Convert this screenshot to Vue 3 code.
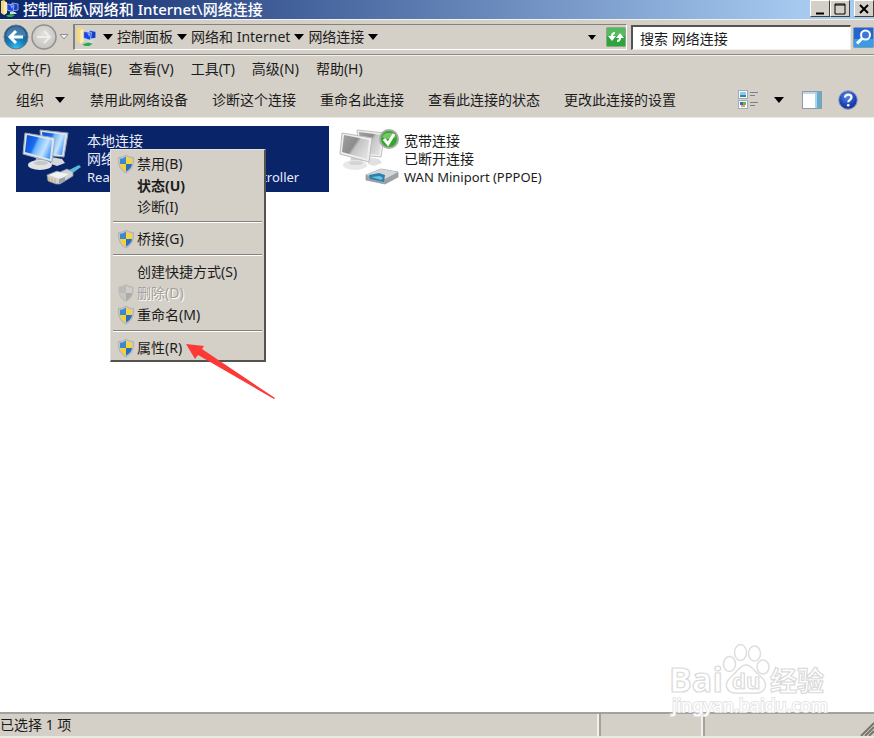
<script setup>
import { ref } from "vue";

const search = ref("搜索 网络连接");

const crumbs = ["控制面板", "网络和 Internet", "网络连接"];
const menus = ["文件(F)", "编辑(E)", "查看(V)", "工具(T)", "高级(N)", "帮助(H)"];
const commands = [
  "禁用此网络设备",
  "诊断这个连接",
  "重命名此连接",
  "查看此连接的状态",
  "更改此连接的设置",
];

const contextMenu = [
  [
    { text: "禁用(B)", shield: true },
    { text: "状态(U)", bold: true },
    { text: "诊断(I)" },
  ],
  [{ text: "桥接(G)", shield: true }],
  [
    { text: "创建快捷方式(S)" },
    { text: "删除(D)", shield: true, disabled: true },
    { text: "重命名(M)", shield: true },
  ],
  [{ text: "属性(R)", shield: true }],
];
</script>

<template>
  <div class="window">
    <svg class="defs" width="0" height="0" aria-hidden="true">
      <defs>
        <linearGradient id="screen" x1="0" y1="0.2" x2="1" y2="0.6">
          <stop offset="0" stop-color="#0d4fd6" />
          <stop offset="0.35" stop-color="#1a6cf0" />
          <stop offset="0.45" stop-color="#6db4ff" />
          <stop offset="0.75" stop-color="#c4e4ff" />
          <stop offset="1" stop-color="#4b9cf8" />
        </linearGradient>
        <linearGradient id="screenOff" x1="0" y1="0" x2="1" y2="0.6">
          <stop offset="0" stop-color="#a2a2a2" />
          <stop offset="0.5" stop-color="#8c8c8c" />
          <stop offset="0.6" stop-color="#c4c4c4" />
          <stop offset="1" stop-color="#dedede" />
        </linearGradient>
        <radialGradient id="backFill" cx="0.5" cy="0.95" r="0.9">
          <stop offset="0" stop-color="#35c0ee" />
          <stop offset="0.45" stop-color="#1479b4" />
          <stop offset="1" stop-color="#124a80" />
        </radialGradient>
        <radialGradient id="forwardFill" cx="0.5" cy="0.4" r="0.6">
          <stop offset="0" stop-color="#e2e0dc" />
          <stop offset="1" stop-color="#c6c4c0" />
        </radialGradient>
        <radialGradient id="helpFill" cx="0.45" cy="0.3" r="0.8">
          <stop offset="0" stop-color="#5c8ae8" />
          <stop offset="0.6" stop-color="#1c43b4" />
          <stop offset="1" stop-color="#102a80" />
        </radialGradient>
        <symbol id="folderNet" viewBox="0 0 18 18">
          <path d="M0 1l3-1 2 2v11l-2 2-3-2z" fill="#f3d978" />
          <path d="M3 3l3-1v11l-3 2z" fill="#fbeeb0" />
          <path d="M11 3l6 1v6l-6 1z" fill="#123fc4" stroke="#c9d6ee" stroke-width="0.7" />
          <path d="M6 4l7 1-1 7-6-2z" fill="#1d45e4" stroke="#c9d6ee" stroke-width="0.7" />
          <path d="M9 5l3 1-1 3z" fill="#7db4ff" />
          <path d="M9 12h5l2 2H9z" fill="#d5dbe2" />
          <path d="M5 15.500l5-1.500 4 1-3 2-4 0z" fill="#25b04b" />
        </symbol>
        <symbol id="shield" viewBox="0 0 18 20">
          <path d="M9 1C6.500 3 4 3.500 1.500 3.500C1 11 3 16 9 19C15 16 17 11 16.500 3.500C14 3.500 11.500 3 9 1z" fill="#c2c5c8" stroke="#a5a8ac" stroke-width="0.700" />
          <path d="M9 2.500C7 4 5 4.800 3 4.800V10H9z" fill="#3c88cf" />
          <path d="M9 2.500C11 4 13 4.800 15 4.800V10H9z" fill="#f6d545" />
          <path d="M3 10H9V17.500C5.500 15.500 3.300 13 3 10z" fill="#f7cf3b" />
          <path d="M15 10H9V17.500C12.500 15.500 14.700 13 15 10z" fill="#2a6ec0" />
        </symbol>
        <symbol id="shieldOff" viewBox="0 0 18 20">
          <path d="M9 1C6.500 3 4 3.500 1.500 3.500C1 11 3 16 9 19C15 16 17 11 16.500 3.500C14 3.500 11.500 3 9 1z" fill="#bcbab6" />
          <path d="M9 2.500C11 4 13 4.800 15 4.800V10H9z" fill="#d0cdc8" />
          <path d="M3 10H9V17.500C5.500 15.500 3.300 13 3 10z" fill="#c9c6c1" />
          <path d="M15 10H9V17.500C12.500 15.500 14.700 13 15 10z" fill="#adaba8" />
        </symbol>
      </defs>
    </svg>

    <header class="titlebar">
      <svg width="18" height="18"><use href="#folderNet" /></svg>
      <h1>控制面板\网络和 Internet\网络连接</h1>
      <div class="window-buttons">
        <button aria-label="最小化">
          <svg width="14" height="14"><path d="M3 11.500h8" stroke="#000" stroke-width="2" /></svg>
        </button>
        <button aria-label="最大化">
          <svg width="14" height="14"><path d="M2 2h10v10H2zM2 3h10" fill="none" stroke="#000" /></svg>
        </button>
        <button class="close" aria-label="关闭">
          <svg width="14" height="14"><path d="M3 3l8 8M11 3l-8 8" stroke="#000" stroke-width="2" /></svg>
        </button>
      </div>
    </header>

    <div class="navbar">
      <div class="history">
        <button aria-label="后退">
          <svg width="26" height="26">
            <circle cx="13" cy="13" r="12" fill="url(#backFill)" stroke="#69798a" />
            <path d="M3 12a10 10 0 0 1 20 0c-6 2-14 2-20 0z" fill="#fff" opacity="0.2" />
            <path d="M20 13H8M13 7l-6 6 6 6" fill="none" stroke="#fff" stroke-width="3" />
          </svg>
        </button>
        <button aria-label="前进">
          <svg width="26" height="26">
            <circle cx="13" cy="13" r="12" fill="url(#forwardFill)" stroke="#8f8f8f" stroke-width="1.500" />
            <path d="M6 13h12M13 7l6 6-6 6" fill="none" stroke="#efeeeb" stroke-width="2" />
          </svg>
        </button>
        <button aria-label="最近的页面">
          <svg width="10" height="8"><path d="M1 1.500h8L5 6z" fill="#f3f3f3" stroke="#8c8c94" /></svg>
        </button>
      </div>
      <nav class="address">
        <svg width="20" height="20"><use href="#folderNet" /></svg>
        <button class="arrow" aria-label="展开"></button>
        <template v-for="crumb in crumbs" :key="crumb">
          <a href="#">{{ crumb }}</a>
          <button class="arrow" :aria-label="crumb + ' 子项'"></button>
        </template>
        <button class="arrow small last" aria-label="以前的位置"></button>
        <button class="refresh" aria-label="刷新">
          <svg width="20" height="20">
            <rect x="0.500" y="0.500" width="19" height="19" rx="1" fill="#2da53c" stroke="#8aa888" />
            <path d="M1 1h18v8H1z" fill="#70c873" opacity="0.600" />
            <path d="M9 5C6 5 5 7 5 9H2l4 5 4-5H7c0-1 1-2 2-2zM11 15c3 0 4-2 4-4h3l-4-5-4 5h3c0 1-1 2-2 2z" fill="#fff" />
          </svg>
        </button>
      </nav>
      <form class="search" @submit.prevent>
        <input v-model="search" type="text" aria-label="搜索 网络连接" />
        <button aria-label="搜索">
          <svg width="21" height="21">
            <rect x="0.500" y="0.500" width="20" height="20" rx="1" fill="#2467cc" stroke="#8199c0" />
            <path d="M1 12h19v8H1z" fill="#45b5ec" opacity="0.700" />
            <circle cx="12.500" cy="8" r="4.500" fill="#3c78d8" stroke="#fff" stroke-width="2" />
            <path d="M9 11.500l-5 5" stroke="#fff" stroke-width="3" />
          </svg>
        </button>
      </form>
    </div>

    <nav class="menubar">
      <button v-for="menu in menus" :key="menu">{{ menu }}</button>
    </nav>

    <div class="toolbar">
      <button class="organize">组织<span class="arrow"></span></button>
      <button v-for="command in commands" :key="command">{{ command }}</button>
      <div class="tools">
        <button aria-label="更改视图">
          <svg width="20" height="20">
            <rect x="0.500" y="0.500" width="9" height="8" fill="#f8fbff" stroke="#a2acb8" />
            <path d="M2 2h6v3H2z" fill="#8bc8f4" />
            <path d="M2 5h6v2H2z" fill="#318d83" />
            <rect x="0.500" y="10.500" width="9" height="8" fill="#f8fbff" stroke="#a2acb8" />
            <path d="M2 12h3v3H2z" fill="#3d68c9" />
            <path d="M5 12h3v3H5z" fill="#69b64a" />
            <path d="M3 15h4v2H3z" fill="#e2a341" />
            <path d="M12 2.500h8M12 5.500h5M12 12.500h8M12 15.500h5" stroke="#77828f" />
          </svg>
        </button>
        <button class="arrow" aria-label="更多选项"></button>
        <button class="pane" aria-label="显示预览窗格">
          <svg width="20" height="18">
            <rect x="0.500" y="0.500" width="19" height="17" fill="#fff" stroke="#8a9bac" />
            <path d="M1 1h18v2H1z" fill="#c3d5e6" />
            <path d="M13 1h6v16h-6z" fill="#67aacb" />
            <path d="M13 1h2v16h-2z" fill="#a7d5e9" />
          </svg>
        </button>
        <button aria-label="获取帮助">
          <svg width="20" height="20">
            <circle cx="10" cy="10" r="9.300" fill="url(#helpFill)" stroke="#8c9cc4" />
            <path d="M7 7.500C7 3.500 13.500 3.800 13.500 7.300C13.500 9.800 10.200 9.800 10.200 12.300" fill="none" stroke="#fff" stroke-width="2.200" />
            <circle cx="10.200" cy="15.300" r="1.300" fill="#fff" />
          </svg>
        </button>
      </div>
    </div>

    <main class="content">
      <article class="connection selected">
        <svg width="62" height="60">
          <path d="M29 28l11 2 3 4-8 3-6-2z" fill="#d5d9dc" />
          <path d="M18 1l28 3-4 24-22-2z" fill="#dbe4ea" stroke="#8f9fae" />
          <path d="M20 3l23 3-3 20-18-2z" fill="url(#screen)" />
          <path d="M14 28l11 2 1 6H13z" fill="#aeb5bc" />
          <ellipse cx="18" cy="36" rx="12" ry="5" fill="#e0e2e4" />
          <ellipse cx="19" cy="34" rx="7" ry="2" fill="#c3c8cc" />
          <path d="M3 4l30 5-3 24-29-8z" fill="#dce5ec" stroke="#9daab8" />
          <path d="M5 6l25 5-2 19L3 23z" fill="url(#screen)" />
          <path d="M45 42l12-6 2 2-11 8z" fill="#55b9dc" />
          <path d="M25 46l10-4 3 1 7-3 6 3v4l-13 8-4 0-8-3z" fill="#cdd2d6" stroke="#8b949b" stroke-width="0.700" />
          <path d="M27 46l8-3 12 2-9 5z" fill="#f1f2f2" />
          <path d="M27 48v4m3-3v4m3-3v4" stroke="#d1a94a" />
          <path d="M37 50v5l6-3v-4z" fill="#9aa1a7" />
        </svg>
        <div class="details">
          <p>本地连接</p>
          <p>网络</p>
          <p class="device">Realtek PCIe GBE Family Controller</p>
        </div>
      </article>

      <article class="connection">
        <svg width="62" height="60">
          <path d="M29 28l11 2 3 4-8 3-6-2z" fill="#e0e0e0" />
          <path d="M18 1l28 3-4 24-22-2z" fill="#eee" stroke="#c0c0c0" />
          <path d="M20 3l23 3-3 20-18-2z" fill="url(#screenOff)" />
          <path d="M12 28l11 2 1 6H11z" fill="#d0d0d0" />
          <ellipse cx="16" cy="36" rx="12" ry="5" fill="#e8e8e8" />
          <ellipse cx="17" cy="34" rx="7" ry="2" fill="#d4d4d4" />
          <path d="M3 4l30 5-3 24-29-8z" fill="#efefef" stroke="#bbb" />
          <path d="M5 6l25 5-2 19L3 23z" fill="url(#screenOff)" />
          <path d="M27 46l15-6 17 3v5l-13 7-19-4z" fill="#9da2a7" stroke="#8c9298" stroke-width="0.700" />
          <path d="M27 46l15-6 17 3-13 7z" fill="#d4d7da" />
          <path d="M30 46l10-2 6 2-1 7-14-3z" fill="#2f7fae" />
          <path d="M32 48l9-1 3 2-2 2z" fill="#6bc0e4" />
          <circle cx="50" cy="10" r="9" fill="#34a729" stroke="#a7aba7" stroke-width="2" />
          <path d="M43 8a8 8 0 0 1 14 0c-3 2-10 3-14 0z" fill="#9fdc91" opacity="0.600" />
          <path d="M45 10l4 5 6-10" fill="none" stroke="#fff" stroke-width="3" />
        </svg>
        <div class="details">
          <p>宽带连接</p>
          <p>已断开连接</p>
          <p class="device">WAN Miniport (PPPOE)</p>
        </div>
      </article>

      <div class="context-menu" role="menu">
        <div v-for="(group, i) in contextMenu" :key="i" class="group" role="group">
          <button
            v-for="item in group"
            :key="item.text"
            role="menuitem"
            :class="{ bold: item.bold, shielded: item.shield }"
            :disabled="item.disabled"
          >
            <span class="icon">
              <svg v-if="item.shield" width="18" height="20">
                <use :href="item.disabled ? '#shieldOff' : '#shield'" />
              </svg>
            </span>
            {{ item.text }}
          </button>
        </div>
      </div>

      <svg class="pointer" width="90" height="56" aria-hidden="true">
        <path d="M0 0L18 2L16 5L89 54L88 55L12 11L9 15z" fill="#fb3a38" />
      </svg>
    </main>

    <footer class="statusbar">
      <span class="status">已选择 1 项</span>
      <span class="cell"></span>
      <span class="cell grip">
        <svg width="14" height="14">
          <path d="M1 14L14 1M5 14l9-9M9 14l5-5" stroke="#77756f" stroke-width="2" />
        </svg>
      </span>
    </footer>

    <svg class="watermark" width="164" height="78" aria-hidden="true">
      <g fill="#fff" stroke="#dedede" stroke-width="1.500">
        <ellipse cx="61.500" cy="22" rx="6" ry="7.500" />
        <ellipse cx="72.500" cy="10.500" rx="6" ry="8" />
        <ellipse cx="86.500" cy="11.500" rx="6" ry="7.500" />
        <ellipse cx="95" cy="25" rx="6" ry="7" />
        <path d="M78 23c-6 0-8 6-13 10-5 4-8 8-6 13 3 7 11 5 19 5s16 2 19-5c2-5-1-9-6-13-5-4-7-10-13-10z" />
      </g>
      <g class="outlined">
        <text x="1" y="50" font-size="34">Bai</text>
        <text x="64" y="47" font-size="22">du</text>
        <text x="102" y="49" font-size="27">经验</text>
      </g>
      <text class="site" x="4" y="70" font-size="18">jingyan.baidu.com</text>
    </svg>
  </div>
</template>

<style>
body {
  margin: 0;
  background: #fff;
}
</style>

<style scoped>
.window {
  position: relative;
  display: flex;
  flex-direction: column;
  min-height: 100vh;
  background: #d4d0c8;
  color: #1c1c1c;
  font: 14px/18px "Noto Sans", "Noto Sans CJK SC", sans-serif;
}
.defs {
  position: absolute;
}
svg {
  display: block;
  flex: none;
}
button {
  display: flex;
  align-items: center;
  padding: 0;
  border: 0;
  background: none;
  color: inherit;
  font: inherit;
  white-space: nowrap;
}
.arrow::before {
  content: "";
  display: block;
  border: 5px solid transparent;
  border-top: 6px solid #000;
  border-bottom: 0;
}
.arrow.small::before {
  border-width: 4px;
  border-top-width: 5px;
  border-bottom: 0;
}

.titlebar {
  display: flex;
  align-items: flex-start;
  height: 19px;
  gap: 4px;
  padding-left: 1px;
  background: linear-gradient(90deg, #0a246a, #a6caf0 92%);
}
.titlebar h1 {
  flex: 1;
  margin: 0;
  color: #fff;
  font-size: 15px;
  font-weight: 500;
  line-height: 18px;
  white-space: nowrap;
}
.window-buttons {
  display: flex;
}
.window-buttons button {
  justify-content: center;
  width: 20px;
  height: 17px;
  background: #d4d0c8;
  border: 1px solid #404040;
  border-top-color: #fff;
  border-left-color: #fff;
}
.window-buttons .close {
  margin-left: 4px;
}

.navbar {
  display: flex;
  align-items: center;
  gap: 4px;
  height: 34px;
  padding-left: 3px;
  border-top: 1px solid #f2f0ec;
  border-bottom: 1px solid #8d8a84;
}
.history {
  display: flex;
  align-items: center;
  gap: 2px;
  width: 66px;
}
.address {
  display: flex;
  flex: 1;
  align-items: center;
  gap: 4px;
  height: 24px;
  padding-left: 2px;
  border: 1px solid #fff;
  border-top-color: #85827c;
  border-left: 2px solid #85827c;
}
.address > svg {
  margin-right: 2px;
}
.address a {
  color: inherit;
  text-decoration: none;
  white-space: nowrap;
}
.address .last {
  margin-left: auto;
}
.refresh {
  margin-left: 6px;
}
.search {
  display: flex;
  flex: 0 1 243px;
  align-items: center;
  gap: 2px;
}
.search input {
  flex: 1;
  min-width: 0;
  height: 25px;
  box-sizing: border-box;
  padding: 0 7px;
  border: 1px solid #f0eeea;
  border-top: 2px solid #55534f;
  border-left: 2px solid #55534f;
  background: #fff;
  color: inherit;
  font: inherit;
}

.menubar {
  display: flex;
  align-items: center;
  gap: 17px;
  height: 26px;
  padding-left: 7px;
  border-top: 1px solid #f2f0ec;
}
.toolbar {
  display: flex;
  align-items: center;
  gap: 24px;
  height: 35px;
  padding: 0 16px;
  border-bottom: 1px solid #ebe9e4;
}
.organize {
  gap: 11px;
  margin-right: 1px;
}
.tools {
  display: flex;
  align-items: center;
  gap: 16px;
  margin-left: auto;
}
.tools .pane {
  margin-left: 2px;
}

.content {
  position: relative;
  display: flex;
  flex: 1;
  align-items: flex-start;
  gap: 4px;
  padding: 8px 16px;
  background: #fff;
}
.connection {
  display: flex;
  width: 313px;
  height: 66px;
  box-sizing: border-box;
  gap: 3px;
  padding: 3px 6px;
}
.connection.selected {
  background: #0a246a;
  color: #e8ecf8;
}
.details {
  padding-top: 3px;
  white-space: nowrap;
}
.details p {
  margin: 0;
}
.details .device {
  font-size: 13px;
}

.context-menu {
  position: absolute;
  top: 31px;
  left: 110px;
  width: 156px;
  box-sizing: border-box;
  padding: 3px 2px 1px;
  background: #d4d0c8;
  border: 1px solid #e4e1da;
  border-right: 2px solid #55534f;
  border-bottom: 2px solid #55534f;
}
.group + .group::before {
  content: "";
  display: block;
  height: 1px;
  margin: 4px 0 5px;
  border-bottom: 1px solid #fff;
  background: #85827c;
}
.group button {
  width: 100%;
  height: 21px;
  gap: 2px;
  padding-left: 4px;
}
.group .shielded {
  height: 22px;
}
.group .bold {
  font-weight: 700;
}
.group button:disabled {
  color: #a3a09a;
  text-shadow: 1px 1px #fff;
}
.icon {
  width: 18px;
}
.pointer {
  position: absolute;
  top: 226px;
  left: 186px;
}

.statusbar {
  display: flex;
  height: 22px;
  border-top: 2px solid #a5a29c;
  border-bottom: 2px solid #ebe9e4;
}
.status {
  flex: 1;
  line-height: 22px;
}
.cell {
  width: 102px;
  border-left: 2px solid #a5a29c;
  box-shadow: -2px 0 #f2f0ec;
}
.grip {
  display: flex;
  align-items: flex-end;
  justify-content: flex-end;
  width: 169px;
}

.watermark {
  position: absolute;
  right: 42px;
  bottom: 18px;
  overflow: visible;
}
.outlined {
  fill: #fff;
  stroke: #dadada;
  stroke-width: 1.2px;
  font-family: "Open Sans", "Noto Sans CJK SC", sans-serif;
  font-weight: 700;
}
.site {
  fill: #fff;
  stroke: #e4e4e4;
  stroke-width: 2px;
  paint-order: stroke;
  font-family: "Noto Sans", sans-serif;
}
</style>
